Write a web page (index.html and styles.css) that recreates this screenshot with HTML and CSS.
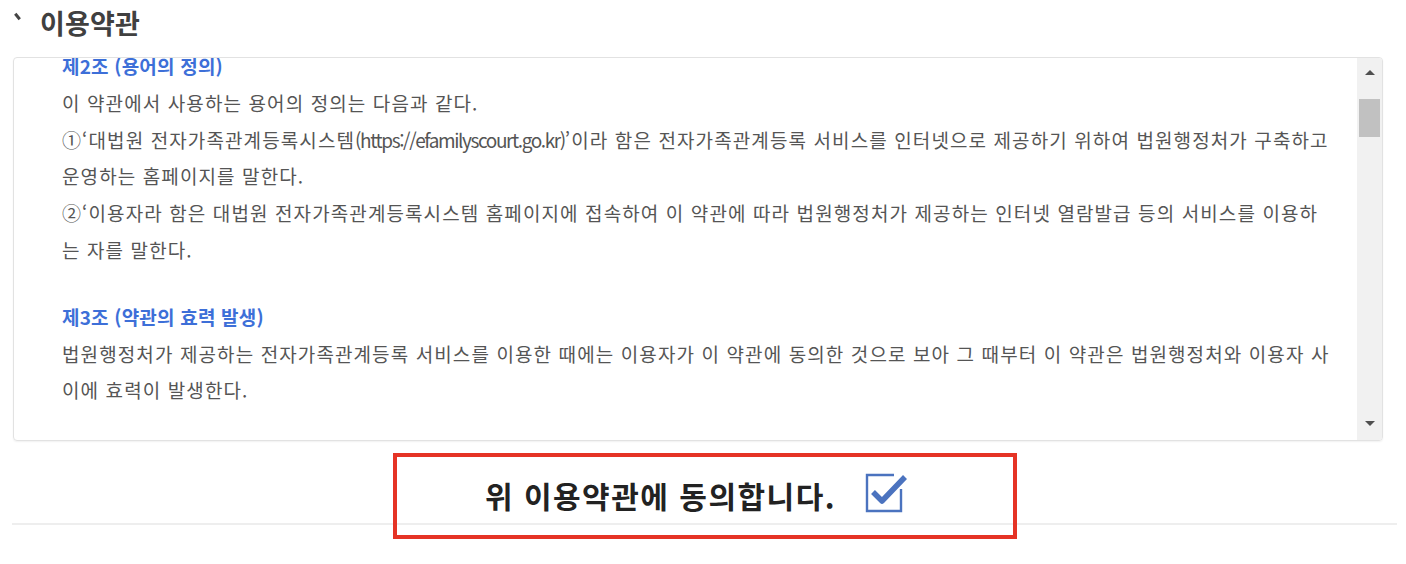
FILE: index.html
```html
<!doctype html>
<html lang="ko">
<head>
    <meta charset="UTF-8">
    <meta name="viewport" content="width=device-width, initial-scale=1.0">
    <title>이용약관</title>
    <link rel="stylesheet" href="styles.css">
</head>
<body>
    <div class="page">
        <!-- 제목 -->
        <h2 class="section-title"><span class="tick"></span>이용약관</h2>

        <!-- 약관 박스 -->
        <div class="terms-box">
            <div class="terms-view">
                <div class="terms-body">
                    <h3>제2조 (용어의 정의)</h3>
                    <p>이 약관에서 사용하는 용어의 정의는 다음과 같다.<br>
                    ①‘대법원 전자가족관계등록시스템<span class="url">(https://efamilyscourt.go.kr)</span>’이라 함은 전자가족관계등록 서비스를 인터넷으로 제공하기 위하여 법원행정처가 구축하고 운영하는 홈페이지를 말한다.<br>
                    ②‘이용자라 함은 대법원 전자가족관계등록시스템 홈페이지에 접속하여 이 약관에 따라 법원행정처가 제공하는 인터넷 열람발급 등의 서비스를 이용하는 자를 말한다.</p>

                    <h3>제3조 (약관의 효력 발생)</h3>
                    <p>법원행정처가 제공하는 전자가족관계등록 서비스를 이용한 때에는 이용자가 이 약관에 동의한 것으로 보아 그 때부터 이 약관은 법원행정처와 이용자 사이에 효력이 발생한다.</p>
                </div>
            </div>
            <!-- 스크롤바 -->
            <div class="scrollbar">
                <span class="arrow up"></span>
                <div class="track"><span class="thumb"></span></div>
                <span class="arrow down"></span>
            </div>
        </div>

        <!-- 동의 -->
        <div class="agree-row">
            <label class="agree">
                <span>위 이용약관에 동의합니다.</span>
                <svg class="check" width="44" height="40" viewBox="0 0 44 40">
                    <path d="M30 2 H3 V38 H37 V16" fill="none" stroke="#4b73bf" stroke-width="2.4"/>
                    <path d="M9 19 L18 28 L41 4" fill="none" stroke="#4b73bf" stroke-width="5.5" stroke-linejoin="round"/>
                </svg>
            </label>
            <div class="highlight"></div>
        </div>
    </div>
</body>
</html>
```

FILE: styles.css
```css
/* 기본 */
body, html {
    margin: 0;
    padding: 0;
    background: #fff;
    font-family: "Noto Sans CJK KR", "Noto Sans", sans-serif;
    color: #555;
}

.page {
    padding: 0 9px 40px 12px;
}

/* 제목 */
.section-title {
    margin: 0;
    height: 57px;
    display: flex;
    align-items: center;
    padding-bottom: 12px;
    box-sizing: border-box;
    font-size: 27px;
    font-weight: 700;
    color: #404040;
    letter-spacing: 0.2px;
}

.tick {
    display: inline-block;
    width: 3px;
    height: 7px;
    background: #444;
    transform: rotate(-40deg);
    margin: 0 21px 12px 4px;
}

/* 약관 박스 */
.terms-box {
    display: flex;
    height: 384px;
    margin-right: 14px;
    margin-left: 1px;
    border: 1px solid #e2e2e2;
    border-radius: 4px;
    box-shadow: 0 1px 2px rgba(0, 0, 0, 0.06);
    box-sizing: border-box;
    overflow: hidden;
}

.terms-view {
    flex: 1;
    overflow: hidden;
}

.terms-body {
    margin-top: -10px;
    padding: 0 25px 0 48px;
    font-size: 19px;
    line-height: 36.8px;
    letter-spacing: 1.1px;
    word-break: break-all;
}

.terms-body h3 {
    margin: 0;
    font-size: 19px;
    font-weight: 700;
    color: #3d6fd8;
    letter-spacing: 0.2px;
}

.terms-body p {
    margin: 0 0 30px;
}

.url {
    letter-spacing: -1.4px;
}

/* 스크롤바 */
.scrollbar {
    width: 25px;
    background: #f1f1f1;
    display: flex;
    flex-direction: column;
    align-items: center;
}

.arrow {
    width: 0;
    height: 0;
    border-left: 5px solid transparent;
    border-right: 5px solid transparent;
    margin: 12px 0;
}

.arrow.up {
    border-bottom: 5px solid #505050;
}

.arrow.down {
    border-top: 5px solid #505050;
    margin-bottom: 14px;
}

.track {
    flex: 1;
    width: 100%;
    display: flex;
    justify-content: center;
    padding-top: 12px;
}

.thumb {
    width: 21px;
    height: 38px;
    background: #c1c1c1;
}

/* 동의 영역 */
.agree-row {
    position: relative;
    height: 84px;
    border-bottom: 2px solid #eeeeee;
    display: flex;
    justify-content: center;
    align-items: center;
    padding-top: 26px;
    box-sizing: border-box;
    padding-right: 16px;
}

.agree {
    display: flex;
    align-items: center;
    gap: 28px;
    font-size: 30px;
    font-weight: 700;
    color: #222;
    letter-spacing: 1.5px;
}

.check {
    margin-top: -4px;
}

/* 빨간 강조 표시 */
.highlight {
    position: absolute;
    z-index: 1;
    left: calc(50% - 312px);
    top: 12px;
    width: 624px;
    height: 86px;
    border: 4px solid #e53325;
    box-sizing: border-box;
}
```
